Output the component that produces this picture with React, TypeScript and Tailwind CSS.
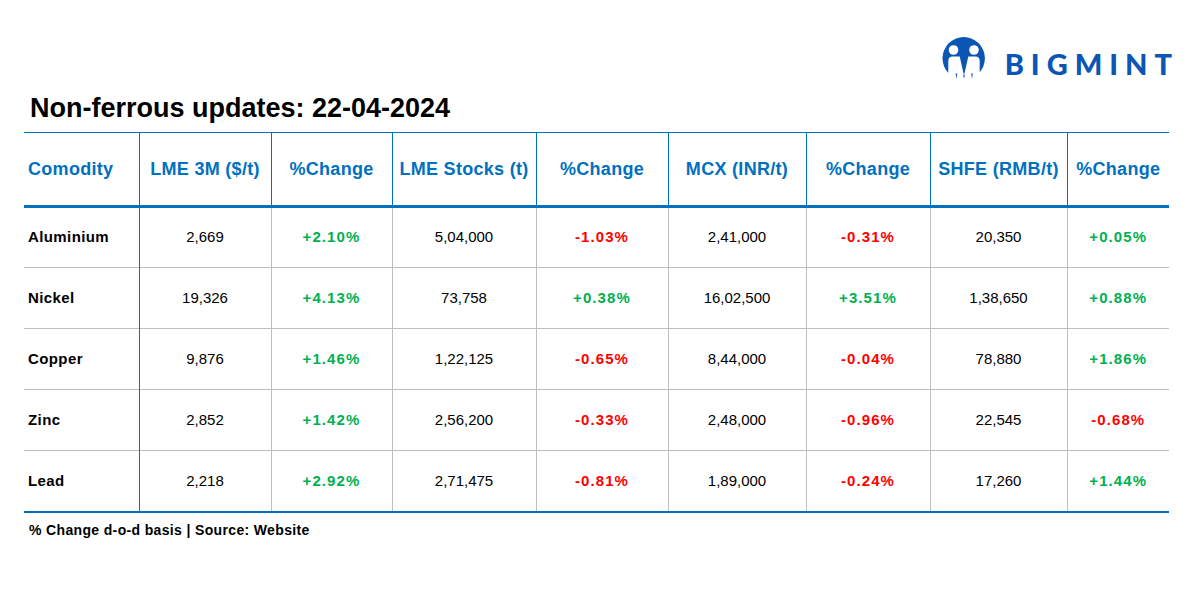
import React from 'react';

type Row = {
  name: string;
  lme: string;
  lmeChg: string;
  stock: string;
  stockChg: string;
  mcx: string;
  mcxChg: string;
  shfe: string;
  shfeChg: string;
};

const rows: Row[] = [
  { name: 'Aluminium', lme: '2,669', lmeChg: '+2.10%', stock: '5,04,000', stockChg: '-1.03%', mcx: '2,41,000', mcxChg: '-0.31%', shfe: '20,350', shfeChg: '+0.05%' },
  { name: 'Nickel', lme: '19,326', lmeChg: '+4.13%', stock: '73,758', stockChg: '+0.38%', mcx: '16,02,500', mcxChg: '+3.51%', shfe: '1,38,650', shfeChg: '+0.88%' },
  { name: 'Copper', lme: '9,876', lmeChg: '+1.46%', stock: '1,22,125', stockChg: '-0.65%', mcx: '8,44,000', mcxChg: '-0.04%', shfe: '78,880', shfeChg: '+1.86%' },
  { name: 'Zinc', lme: '2,852', lmeChg: '+1.42%', stock: '2,56,200', stockChg: '-0.33%', mcx: '2,48,000', mcxChg: '-0.96%', shfe: '22,545', shfeChg: '-0.68%' },
  { name: 'Lead', lme: '2,218', lmeChg: '+2.92%', stock: '2,71,475', stockChg: '-0.81%', mcx: '1,89,000', mcxChg: '-0.24%', shfe: '17,260', shfeChg: '+1.44%' },
];

const headers = [
  'LME 3M ($/t)',
  '%Change',
  'LME Stocks (t)',
  '%Change',
  'MCX (INR/t)',
  '%Change',
  'SHFE (RMB/t)',
  '%Change',
];

const colWidths = ['w-[115px]', 'w-[132px]', 'w-[121px]', 'w-[144px]', 'w-[132px]', 'w-[138px]', 'w-[124px]', 'w-[137px]', 'w-[102px]'];

const Logo = () => (
  <div className="flex items-center gap-[19px] h-[44px]">
    <svg width="44" height="44" viewBox="0 0 44 44">
      <circle cx="21.7" cy="21.3" r="21.2" fill="#0b55b5" />
      <circle cx="11.5" cy="13" r="4.8" fill="#fff" />
      <circle cx="32" cy="13" r="4.8" fill="#fff" />
      <path d="M6.3 44 V24 Q6.3 19.5 10.5 19.5 H17.7 L22 38.5 L26.3 19.5 H33.5 Q37.7 19.5 37.7 24 V44 Z" fill="#fff" />
      <path d="M13.6 36.5 L15.2 36.5 L14.4 42 Z" fill="#0b55b5" />
      <path d="M29.2 36.5 L30.8 36.5 L30 42 Z" fill="#0b55b5" />
      <path d="M21.2 38 L22.8 38 L22 42 Z" fill="#0b55b5" />
    </svg>
    <span className="mt-[9px] text-[29px] font-black tracking-[7px] text-[#0b55b5] leading-none font-['Lato',sans-serif]">
      BIGMINT
    </span>
  </div>
);

const Pct = ({ v }: { v: string }) => (
  <span className={`font-bold tracking-[1.1px] ${v.startsWith('-') ? 'text-[#ff0000]' : 'text-[#00b050]'}`}>{v}</span>
);

const App = () => {
  return (
    <div className="w-[1200px] h-[600px] bg-white font-['Liberation_Sans',Arial,sans-serif] text-black">
      <div className="flex justify-end pt-[37px] pr-[21px]">
        <Logo />
      </div>
      <h1 className="ml-[30px] mt-[11px] text-[27px] font-bold leading-[32px]">
        Non-ferrous updates: 22-04-2024
      </h1>
      <table className="ml-[24px] mt-[8px] border-collapse table-fixed w-[1145px]">
        <thead>
          <tr className="h-[74px] border-t border-[#0070c0] border-b-[3px]">
            <th className={`${colWidths[0]} text-left pl-[4px] text-[18px] font-bold tracking-[0.3px] text-[#0070c0] border-r border-[#0070c0]`}>
              Comodity
            </th>
            {headers.map((h, i) => (
              <th
                key={i}
                className={`${colWidths[i + 1]} text-center text-[18px] font-bold tracking-[0.3px] text-[#0070c0] ${i < headers.length - 1 ? 'border-r border-[#0070c0]' : ''}`}
              >
                {h}
              </th>
            ))}
          </tr>
        </thead>
        <tbody className="text-[15px]">
          {rows.map((r, idx) => (
            <tr
              key={r.name}
              className={`h-[61px] ${idx === rows.length - 1 ? 'border-b-2 border-[#0070c0]' : 'border-b border-[#bfbfbf]'}`}
            >
              <td className="pl-[4px] font-bold tracking-[0.4px] border-r border-[#0070c0]">{r.name}</td>
              <td className="text-center border-r border-[#bfbfbf]">{r.lme}</td>
              <td className="text-center border-r border-[#bfbfbf]"><Pct v={r.lmeChg} /></td>
              <td className="text-center border-r border-[#bfbfbf]">{r.stock}</td>
              <td className="text-center border-r border-[#bfbfbf]"><Pct v={r.stockChg} /></td>
              <td className="text-center border-r border-[#bfbfbf]">{r.mcx}</td>
              <td className="text-center border-r border-[#bfbfbf]"><Pct v={r.mcxChg} /></td>
              <td className="text-center border-r border-[#bfbfbf]">{r.shfe}</td>
              <td className="text-center"><Pct v={r.shfeChg} /></td>
            </tr>
          ))}
        </tbody>
      </table>
      <p className="ml-[29px] mt-[7px] text-[14px] font-bold tracking-[0.35px]">% Change d-o-d basis | Source: Website</p>
    </div>
  );
};

export default App;
